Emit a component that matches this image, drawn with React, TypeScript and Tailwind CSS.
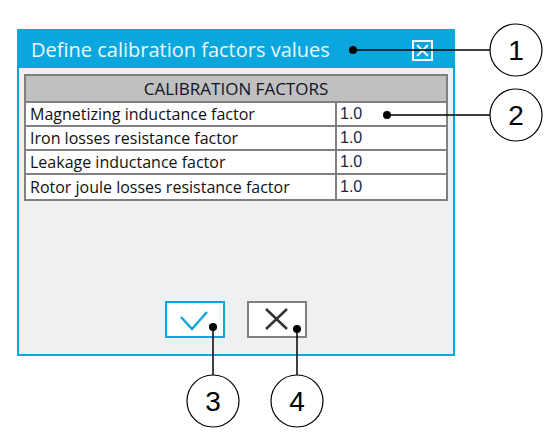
import React from "react";

const rows = [
  "Magnetizing inductance factor",
  "Iron losses resistance factor",
  "Leakage inductance factor",
  "Rotor joule losses resistance factor",
];

function Callout({ cx, cy, n }: { cx: number; cy: number; n: string }) {
  return (
    <g>
      <circle cx={cx} cy={cy} r={26} fill="white" stroke="black" strokeWidth={1.2} />
      <text
        x={cx}
        y={cy + 10}
        textAnchor="middle"
        fontFamily="'Liberation Sans', Arial, sans-serif"
        fontSize={28}
        fill="black"
      >
        {n}
      </text>
    </g>
  );
}

export default function App() {
  return (
    <div className="relative w-[557px] h-[443px] bg-white overflow-hidden">
      <div className="pt-[29px] pl-[17px]">
        <div className="w-[438px] h-[327px] border-2 border-[#0aa6dd] bg-[#f0f0f0] flex flex-col">
          <div className="h-[37px] bg-[#0aa6dd] flex items-center justify-between pl-[12px] pr-[20px]">
            <span
              className="text-[20px] text-[#eef8fc] leading-none"
              style={{ fontFamily: "'Open Sans', 'Noto Sans', sans-serif" }}
            >
              Define calibration factors values
            </span>
            <svg width="21" height="21" viewBox="0 0 21 21" className="shrink-0 mt-[1px]">
              <rect x="1" y="1" width="19" height="19" fill="none" stroke="#f2fafd" strokeWidth="2" />
              <path d="M5 5 L16 16 M16 5 L5 16" stroke="#f2fafd" strokeWidth="2" />
            </svg>
          </div>
          <div className="flex-1 flex flex-col px-[5px] pt-[6px] pb-[16px]">
            <div
              className="border-2 border-[#808080] bg-white"
              style={{ fontFamily: "'Open Sans', 'Noto Sans', sans-serif" }}
            >
              <div className="h-[27px] bg-[#c0c0c0] border-b-2 border-[#808080] flex items-center justify-center text-[17px] text-[#0f1525]">
                CALIBRATION FACTORS
              </div>
              {rows.map((r, i) => (
                <div
                  key={r}
                  className={
                    "flex h-[24px] " + (i < rows.length - 1 ? "border-b-2 border-[#808080]" : "")
                  }
                >
                  <div className="w-[311px] border-r-2 border-[#808080] pl-[4px] flex items-center text-[16px] text-[#111111]">
                    {r}
                  </div>
                  <div
                    className="flex-1 pl-[3px] flex items-center text-[16px] text-[#1c2541]"
                    style={{ fontFamily: "'Liberation Sans', Arial, sans-serif" }}
                  >
                    1.0
                  </div>
                </div>
              ))}
            </div>
            <div className="flex-1" />
            <div className="flex justify-center gap-[22px]">
              <button className="w-[60px] h-[37px] border-2 border-[#0aa6dd] bg-white flex items-center justify-center">
                <svg width="56" height="33" viewBox="0 0 56 33" className="shrink-0">
                  <path d="M14 14 L25 26 L40 9" fill="none" stroke="#0aa6dd" strokeWidth="2.5" />
                </svg>
              </button>
              <button className="w-[60px] h-[37px] border-2 border-[#808080] bg-white flex items-center justify-center">
                <svg width="56" height="33" viewBox="0 0 56 33" className="shrink-0">
                  <path d="M17 6 L38 26 M38 6 L17 26" fill="none" stroke="#333333" strokeWidth="2.5" />
                </svg>
              </button>
            </div>
          </div>
        </div>
      </div>
      <svg className="absolute left-0 top-0" width="557" height="443" viewBox="0 0 557 443">
        <line x1="353" y1="50" x2="490" y2="50" stroke="black" strokeWidth="1.5" />
        <circle cx="353" cy="50" r="4" fill="black" />
        <Callout cx={516} cy={50} n="1" />
        <line x1="387" y1="115" x2="490" y2="115" stroke="black" strokeWidth="1.5" />
        <circle cx="387" cy="115" r="4" fill="black" />
        <Callout cx={516} cy={115} n="2" />
        <line x1="213" y1="327" x2="213" y2="375" stroke="black" strokeWidth="1.5" />
        <circle cx="213" cy="327" r="4" fill="black" />
        <Callout cx={213} cy={401} n="3" />
        <line x1="297" y1="329" x2="297" y2="375" stroke="black" strokeWidth="1.5" />
        <circle cx="297" cy="329" r="4" fill="black" />
        <Callout cx={297} cy={401} n="4" />
      </svg>
    </div>
  );
}
